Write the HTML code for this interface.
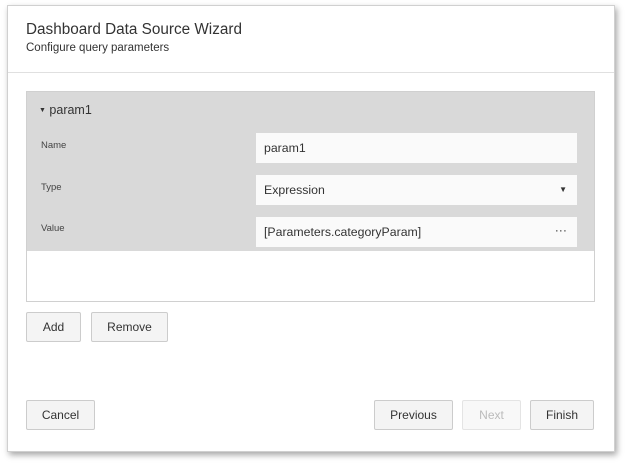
<!DOCTYPE html>
<html><head><style>
body{margin:0;width:627px;height:465px;background:#fff;font-family:"Liberation Sans",sans-serif;position:relative;overflow:hidden}
.dlg{position:absolute;left:7px;top:5px;width:606px;height:445px;background:#fff;border:1px solid #d0d0d0;box-shadow:2px 3px 6px rgba(0,0,0,.35)}
.abs{position:absolute}
.t1{left:18px;top:15px;font-size:15.3px;color:#333}
.t2{left:18px;top:36px;font-size:11.5px;color:#333}
.hr{left:0;top:66px;width:606px;height:1px;background:#e0e0e0}
.panel{left:18px;top:85px;width:567px;height:209px;border:1px solid #d0d0d0;background:#fff}
.gray{left:0;top:0;width:567px;height:159px;background:#d9d9d9}
.lbl{font-size:9.5px;color:#444;left:14px}
.inp{left:229px;width:321px;height:30px;background:#fafafa;box-sizing:border-box;font-size:12.3px;color:#333;line-height:30px;padding-left:8px}
.btn{height:30px;box-sizing:border-box;border:1px solid #ccc;border-radius:2px;background:#f4f4f4;font-size:12px;color:#333;text-align:center;line-height:28px}
</style></head><body>
<div class="dlg">
<div class="abs t1">Dashboard Data Source Wizard</div>
<div class="abs t2">Configure query parameters</div>
<div class="abs hr"></div>
<div class="abs panel">
<div class="abs gray">
<div class="abs" style="left:12px;top:11px;font-size:12.5px;color:#333"><span style="font-size:7px;vertical-align:2px">▼</span> param1</div>
<div class="abs lbl" style="top:48px">Name</div>
<div class="abs lbl" style="top:90px">Type</div>
<div class="abs lbl" style="top:131px">Value</div>
<div class="abs inp" style="top:41px">param1</div>
<div class="abs inp" style="top:83px">Expression<span style="position:absolute;right:10px;top:0;font-size:8px">▼</span></div>
<div class="abs inp" style="top:125px">[Parameters.categoryParam]<span style="position:absolute;right:10px;top:-2px">···</span></div>
</div></div>
<div class="abs btn" style="left:18px;top:306px;width:55px">Add</div>
<div class="abs btn" style="left:83px;top:306px;width:77px">Remove</div>
<div class="abs btn" style="left:18px;top:394px;width:69px">Cancel</div>
<div class="abs btn" style="left:366px;top:394px;width:79px">Previous</div>
<div class="abs btn" style="left:454px;top:394px;width:59px;color:#bbb;border-color:#e4e4e4;background:#f8f8f8">Next</div>
<div class="abs btn" style="left:522px;top:394px;width:64px">Finish</div>
</div>
</body></html>
